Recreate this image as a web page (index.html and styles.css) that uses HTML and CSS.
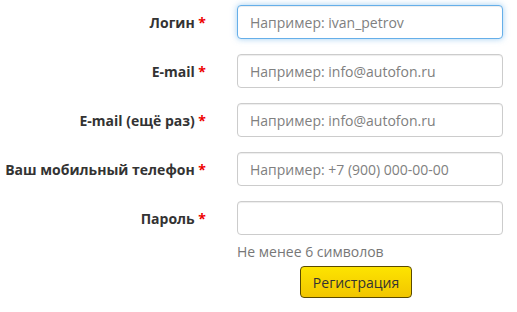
FILE: index.html
```html
<!DOCTYPE html>
<html lang="ru">
<head>
  <meta charset="UTF-8">
  <title>Регистрация</title>
  <link rel="stylesheet" href="styles.css">
</head>
<body>
  <form class="reg-form">
    <div class="form-row">
      <label class="form-label" for="login">Логин <span class="req">*</span></label>
      <input class="form-input is-focused" type="text" id="login" placeholder="Например: ivan_petrov">
    </div>
    <div class="form-row">
      <label class="form-label" for="email">E-mail <span class="req">*</span></label>
      <input class="form-input" type="text" id="email" placeholder="Например: info@autofon.ru">
    </div>
    <div class="form-row">
      <label class="form-label" for="email2">E-mail (ещё раз) <span class="req">*</span></label>
      <input class="form-input" type="text" id="email2" placeholder="Например: info@autofon.ru">
    </div>
    <div class="form-row">
      <label class="form-label" for="phone">Ваш мобильный телефон <span class="req">*</span></label>
      <input class="form-input" type="text" id="phone" placeholder="Например: +7 (900) 000-00-00">
    </div>
    <div class="form-row">
      <label class="form-label" for="pass">Пароль <span class="req">*</span></label>
      <input class="form-input" type="password" id="pass">
    </div>
    <div class="form-help">Не менее 6 символов</div>
    <button class="btn-submit" type="button">Регистрация</button>
  </form>
</body>
</html>
```

FILE: styles.css
```css
body {
  margin: 0;
  padding: 5px 0 0;
  background: #fff;
  font-family: "Open Sans", "DejaVu Sans", sans-serif;
  font-size: 14px;
  color: #333;
}
.reg-form {
  display: flex;
  flex-direction: column;
  gap: 15px;
}
.form-row {
  display: flex;
  align-items: center;
}
.form-label {
  width: 237px;
  padding-right: 31px;
  box-sizing: border-box;
  text-align: right;
  font-weight: bold;
  color: #333;
}
.req {
  color: #e00;
}
.form-input {
  width: 266px;
  height: 34px;
  box-sizing: border-box;
  padding: 6px 12px;
  border: 1px solid #ccc;
  border-radius: 4px;
  font-family: inherit;
  font-size: 14px;
  color: #555;
  box-shadow: inset 0 1px 1px rgba(0,0,0,0.075);
}
.form-input::placeholder {
  color: #808080;
}
.form-input.is-focused {
  border-color: #66afe9;
  box-shadow: inset 0 1px 1px rgba(0,0,0,0.075), 0 0 6px rgba(102,175,233,0.6);
}
.form-help {
  margin: -8px 0 0 237px;
  color: #777;
  line-height: 20px;
}
.btn-submit {
  align-self: flex-start;
  margin: -11px 0 0 300px;
  width: 112px;
  height: 32px;
  border: 1px solid #5a4a00;
  border-radius: 4px;
  background: linear-gradient(#fde400, #f2c600);
  font-family: inherit;
  font-size: 14px;
  color: #333;
  cursor: pointer;
}
```
